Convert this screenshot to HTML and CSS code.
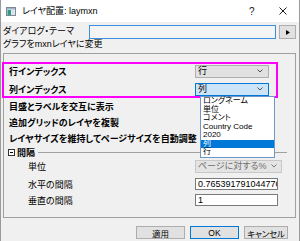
FILE: index.html
```html
<!DOCTYPE html>
<html lang="ja">
<head>
<meta charset="utf-8">
<title>レイヤ配置</title>
<link rel="stylesheet" href="styles.css">
</head>
<body>
<div class="window">
  <div class="titlebar">
    <svg class="app-icon" width="10" height="9" viewBox="0 0 10 9">
      <rect x="0.5" y="0.5" width="9" height="8" fill="#e8eef4" stroke="#7d8894"/>
      <rect x="1" y="1" width="8" height="1.5" fill="#9fb4c8"/>
      <rect x="1.5" y="3" width="3.5" height="5" fill="#2f9a86"/>
      <rect x="5.5" y="3" width="3" height="5" fill="#d7e4ee"/>
    </svg>
    <span class="title">レイヤ配置: laymxn</span>
    <span class="help">?</span>
    <svg class="close" width="8" height="8" viewBox="0 0 8 8">
      <path d="M0.5 0.5 L7.5 7.5 M7.5 0.5 L0.5 7.5" stroke="#1a1a1a" stroke-width="1" fill="none"/>
    </svg>
  </div>
  <div class="content">
    <div class="theme-row">
      <span class="theme-label">ダイアログ・テーマ</span>
      <div class="theme-input"></div>
      <div class="theme-btn">
        <svg width="4" height="5" viewBox="0 0 4 5"><path d="M0 0 L4 2.5 L0 5 Z" fill="#000"/></svg>
      </div>
    </div>
    <div class="desc">グラフをmxnレイヤに変更</div>
    <div class="panel">
      <div class="hl">
        <div class="row tall">
          <span class="label b">行インデックス</span>
          <div class="combo">
            <span class="combo-text">行</span>
            <svg class="chev" width="6" height="4" viewBox="0 0 6 4"><polyline points="0.5,0.5 3,3 5.5,0.5" fill="none" stroke="#555" stroke-width="1"/></svg>
          </div>
        </div>
        <div class="row tall">
          <span class="label b">列インデックス</span>
          <div class="combo active">
            <span class="combo-text">列</span>
            <svg class="chev" width="6" height="4" viewBox="0 0 6 4"><polyline points="0.5,0.5 3,3 5.5,0.5" fill="none" stroke="#555" stroke-width="1"/></svg>
          </div>
        </div>
      </div>
      <div class="row"><span class="label b">目盛とラベルを交互に表示</span></div>
      <div class="row"><span class="label b">追加グリッドのレイヤを複製</span></div>
      <div class="row"><span class="label b">レイヤサイズを維持してページサイズを自動調整</span></div>
      <div class="group">
        <span class="toggle"><span class="minus"></span></span>
        <span class="b">間隔</span>
        <span class="rule"></span>
      </div>
      <div class="row"><span class="label sub">単位</span>
        <div class="combo wide disabled">
          <span class="combo-text">ページに対する%</span>
          <svg class="chev" width="6" height="4" viewBox="0 0 6 4"><polyline points="0.5,0.5 3,3 5.5,0.5" fill="none" stroke="#777" stroke-width="1"/></svg>
        </div>
      </div>
      <div class="row gap"><span class="label sub">水平の間隔</span><div class="textbox">0.765391791044776</div></div>
      <div class="row"><span class="label sub">垂直の間隔</span><div class="textbox">1</div></div>
    </div>
    <div class="buttons">
      <div class="btn">適用</div>
      <div class="btn default">OK</div>
      <div class="btn narrow">キャンセル</div>
    </div>
  </div>
  <div class="dropdown">
    <div class="opt">ロングネーム</div>
    <div class="opt">単位</div>
    <div class="opt">コメント</div>
    <div class="opt">Country Code</div>
    <div class="opt">2020</div>
    <div class="opt sel">列</div>
    <div class="opt">行</div>
  </div>
</div>
</body>
</html>
```
FILE: styles.css
```css
* { box-sizing: border-box; }
html, body { margin: 0; padding: 0; }
body {
  background: #f0f0f0;
  font-family: "Liberation Sans", "Noto Sans CJK JP", sans-serif;
  font-feature-settings: "palt";
  font-size: 9px;
  color: #000;
}
.window {
  position: relative;
  width: 300px;
  height: 241px;
  background: #f0f0f0;
  border-left: 1px solid #9a9a9a;
  border-right: 1px solid #9a9a9a;
  overflow: hidden;
}
.titlebar {
  height: 22px;
  background: #fff;
  display: flex;
  align-items: center;
  padding-left: 5px;
}
.app-icon { flex: none; }
.title { margin-left: 6px; font-size: 9px; line-height: 22px; }
.help { margin-left: auto; font-size: 10px; color: #222; width: 5px; }
.close { margin-left: 25px; margin-right: 12px; }

.content { padding: 0 3px 0 2px; }

.theme-row {
  margin-top: 3px;
  height: 14px;
  display: flex;
  align-items: stretch;
}
.theme-label { width: 86px; flex: none; line-height: 12px; }
.theme-input {
  width: 187px;
  flex: none;
  border: 1px solid #3c8fdc;
  background: #f4f4f4;
}
.theme-btn {
  width: 17px;
  flex: none;
  margin-left: 3px;
  border: 1px solid #adadad;
  background: #e1e1e1;
  display: flex;
  align-items: center;
  justify-content: center;
}
.desc { height: 11px; line-height: 11px; }

.panel {
  margin-top: 3px;
  height: 165px;
  border: 1px solid #a0a0a0;
  padding-top: 8px;
}
.hl {
  margin-left: -2px;
  width: 276px;
  box-shadow: inset 0 0 0 2px #ff00ff;
  padding-left: 2px;
}
.row {
  height: 16px;
  display: flex;
  align-items: center;
}
.row.tall { height: 18px; }
.row.gap { margin-top: 2px; }
.label { width: 191px; flex: none; padding-left: 5px; white-space: nowrap; }
.label.sub { padding-left: 24px; }
.b { font-weight: 700; }

.combo {
  width: 74px;
  height: 13px;
  flex: none;
  border: 1px solid #adadad;
  background: #e1e1e1;
  display: flex;
  align-items: center;
  padding: 0 5px 0 2px;
}
.combo.active { background: #cce4f7; border-color: #0078d7; }
.combo.wide { width: 87px; padding-right: 4px; }
.combo.disabled { background: #e4e4e4; border-color: #c8c8c8; color: #6d6d6d; }
.combo-text { flex: 1; line-height: 11px; white-space: nowrap; }
.chev { flex: none; }

.textbox {
  width: 83px;
  height: 12px;
  flex: none;
  border: 1px solid #7a7a7a;
  background: #fff;
  padding-left: 2px;
  line-height: 10px;
  white-space: nowrap;
  overflow: hidden;
}

.group {
  height: 12px;
  display: flex;
  align-items: center;
  padding-left: 4px;
}
.toggle {
  width: 7px;
  height: 7px;
  border: 1px solid #333;
  background: #fff;
  display: flex;
  align-items: center;
  justify-content: center;
  margin-right: 2px;
}
.minus { width: 3px; height: 1px; background: #000; }
.rule {
  flex: 1;
  height: 1px;
  background: #a0a0a0;
  margin: 0 8px 0 3px;
}

.buttons {
  margin-top: 8px;
  display: flex;
  justify-content: flex-end;
  gap: 5px;
  padding-right: 8px;
}
.btn {
  width: 49px;
  height: 13px;
  border: 1px solid #adadad;
  background: #e1e1e1;
  display: flex;
  align-items: center;
  justify-content: center;
  white-space: nowrap;
  font-size: 8.5px;
}
.btn.default { border-color: #0078d7; }
.btn.narrow { width: 44px; letter-spacing: -0.2px; }

.dropdown {
  position: absolute;
  left: 199px;
  top: 96px;
  width: 75px;
  height: 62px;
  background: #fff;
  border: 1px solid #6f98c8;
  font-size: 8px;
}
.opt {
  height: 8.5px;
  line-height: 8.5px;
  padding-left: 2px;
  white-space: nowrap;
}
.opt.sel { background: #0078d7; color: #fff; }
```
